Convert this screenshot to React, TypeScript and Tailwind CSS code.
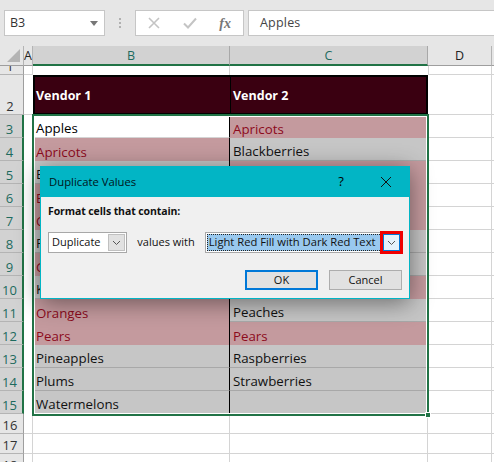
const rows: { n: string; h: string; b: string; bt: string; c: string; ct: string; clip?: boolean }[] = [
  { n: "3", h: "h-[23px]", b: "w", bt: "Apples", c: "r", ct: "Apricots" },
  { n: "4", h: "h-[23px]", b: "r", bt: "Apricots", c: "g", ct: "Blackberries" },
  { n: "5", h: "h-[23px]", b: "g", bt: "B", c: "r", ct: "", clip: true },
  { n: "6", h: "h-[23px]", b: "r", bt: "B", c: "r", ct: "", clip: true },
  { n: "7", h: "h-[23px]", b: "r", bt: "C", c: "r", ct: "", clip: true },
  { n: "8", h: "h-[23px]", b: "g", bt: "F", c: "g", ct: "", clip: true },
  { n: "9", h: "h-[23px]", b: "r", bt: "G", c: "g", ct: "", clip: true },
  { n: "10", h: "h-[23px]", b: "g", bt: "K", c: "r", ct: "", clip: true },
  { n: "11", h: "h-[23px]", b: "r", bt: "Oranges", c: "g", ct: "Peaches" },
  { n: "12", h: "h-[23px]", b: "r", bt: "Pears", c: "r", ct: "Pears" },
  { n: "13", h: "h-[23px]", b: "g", bt: "Pineapples", c: "g", ct: "Raspberries" },
  { n: "14", h: "h-[23px]", b: "g", bt: "Plums", c: "g", ct: "Strawberries" },
  { n: "15", h: "h-[23px]", b: "g", bt: "Watermelons", c: "g", ct: "" },
];

function cellCls(kind: string) {
  if (kind === "w") return "bg-white text-black border-b border-[#d4d4d4]";
  if (kind === "r") return "bg-[#c49a9e] text-[#8c0a1c]";
  return "bg-[#c6c6c6] text-[#111] border-b border-[#a8a8a8]";
}

function Chevron() {
  return (
    <svg width="9" height="6" viewBox="0 0 9 6" fill="none">
      <path d="M1 1 L4.5 4.5 L8 1" stroke="#555" strokeWidth="1" />
    </svg>
  );
}

function RowHead({ n, sel, h }: { n: string; sel?: boolean; h: string }) {
  return (
    <div
      className={`${h} w-6 shrink-0 flex items-end justify-center overflow-hidden border-b ${
        sel
          ? "bg-[#d2d2d2] text-[#1d6b5e] border-[#b4b4b4] border-r-2 border-r-[#217346]"
          : "bg-[#e6e6e6] text-[#333] border-[#b4b4b4] border-r border-r-[#9e9e9e]"
      } text-[13px] leading-[16px] pr-[3px]`}
    >
      {n}
    </div>
  );
}

function EmptyRow({ n, h }: { n: string; h: string }) {
  return (
    <div className="flex">
      <RowHead n={n} h={h} />
      <div className={`${h} w-[9px] shrink-0 border-b border-r border-[#d4d4d4]`} />
      <div className={`${h} w-[197px] shrink-0 border-b border-r border-[#d4d4d4]`} />
      <div className={`${h} w-[198px] shrink-0 border-b border-r border-[#d4d4d4]`} />
      <div className={`${h} w-[64px] shrink-0 border-b border-r border-[#d4d4d4]`} />
      <div className={`${h} flex-1 border-b border-[#d4d4d4]`} />
    </div>
  );
}

export default function App() {
  return (
    <div
      className="relative w-[494px] h-[462px] overflow-hidden bg-white"
      style={{ fontFamily: '"Open Sans", "Noto Sans", sans-serif' }}
    >
      {/* Formula bar */}
      <div className="h-[46px] bg-[#e6e6e6] flex items-start pt-[10px] pl-1">
        <div className="w-[101px] h-[26px] bg-white border border-[#c6c6c6] flex items-center justify-between pl-[5px] pr-[6px] text-[12.5px] text-[#333]">
          <span>B3</span>
          <svg width="8" height="5" viewBox="0 0 8 5">
            <path d="M0 0 H8 L4 5 Z" fill="#777" />
          </svg>
        </div>
        <div className="w-[30px] h-[26px] flex flex-col items-center justify-center gap-[2px]">
          <div className="w-[2px] h-[2px] bg-[#b0b0b0]" />
          <div className="w-[2px] h-[2px] bg-[#b0b0b0]" />
          <div className="w-[2px] h-[2px] bg-[#b0b0b0]" />
        </div>
        <div className="w-[109px] h-[26px] bg-white border border-[#c6c6c6] flex items-center shrink-0">
          <div className="w-[36px] flex justify-center pl-[1px]">
            <svg width="12" height="12" viewBox="0 0 12 12" fill="none">
              <path d="M1 1 L11 11 M11 1 L1 11" stroke="#c4c4c4" strokeWidth="1.6" />
            </svg>
          </div>
          <div className="w-[36px] flex justify-center">
            <svg width="14" height="12" viewBox="0 0 14 12" fill="none">
              <path d="M1 6.5 L5 10.5 L13 1.5" stroke="#c4c4c4" strokeWidth="2" />
            </svg>
          </div>
          <div
            className="w-[36px] text-center text-[14px] italic font-bold text-[#777]"
            style={{ fontFamily: '"Liberation Serif", serif' }}
          >
            fx
          </div>
        </div>
        <div className="ml-[4px] flex-1 h-[26px] bg-white border border-r-0 border-[#c6c6c6] flex items-center pl-[11px] text-[12.5px] text-[#444] tracking-[0.2px]">
          Apples
        </div>
      </div>

      {/* Column headers */}
      <div className="flex h-[20px] text-[12.5px] leading-[20px]">
        <div className="w-6 shrink-0 bg-[#e6e6e6] border-r border-[#b4b4b4] border-b border-b-[#9e9e9e] flex items-end justify-end pr-[3px] pb-[3px]">
          <svg width="13" height="13" viewBox="0 0 13 13">
            <path d="M13 0 V13 H0 Z" fill="#b4b4b4" />
          </svg>
        </div>
        <div className="w-[9px] shrink-0 bg-[#e6e6e6] border-r border-[#b4b4b4] border-b border-b-[#9e9e9e] flex justify-center text-[#222] overflow-hidden">
          A
        </div>
        <div className="w-[197px] shrink-0 bg-[#d2d2d2] border-r border-[#a8a8a8] border-b-2 border-b-[#217346] text-center text-[#1d6b5e]">
          B
        </div>
        <div className="w-[198px] shrink-0 bg-[#d2d2d2] border-r border-[#a8a8a8] border-b-2 border-b-[#217346] text-center text-[#1d6b5e]">
          C
        </div>
        <div className="w-[64px] shrink-0 bg-[#e6e6e6] border-r border-[#b4b4b4] border-b border-b-[#9e9e9e] text-center text-[#222]">
          D
        </div>
        <div className="flex-1 bg-[#e6e6e6] border-b border-b-[#9e9e9e]" />
      </div>

      {/* Row 1 */}
      <div className="flex">
        <RowHead n="1" h="h-[9px]" />
        <div className="h-[9px] w-[9px] shrink-0 border-b border-r border-[#d4d4d4]" />
        <div className="h-[9px] w-[197px] shrink-0 border-r border-[#d4d4d4]" />
        <div className="h-[9px] w-[198px] shrink-0" />
        <div className="h-[9px] w-[64px] shrink-0 border-b border-r border-[#d4d4d4] border-l" />
        <div className="h-[9px] flex-1 border-b border-[#d4d4d4]" />
      </div>

      {/* Row 2 */}
      <div className="flex">
        <RowHead n="2" h="h-[40px]" />
        <div className="h-[40px] w-[9px] shrink-0 border-b border-[#d4d4d4]" />
        <div className="h-[40px] w-[197px] shrink-0 bg-[#3a0011] border-2 border-r-0 border-black text-white font-bold text-[12.5px] flex items-center pl-[1px] pt-[3px]">
          Vendor 1
        </div>
        <div className="h-[40px] w-[198px] shrink-0 bg-[#3a0011] border-2 border-l border-black text-white font-bold text-[12.5px] flex items-center pl-[2px] pt-[3px]">
          Vendor 2
        </div>
        <div className="h-[40px] w-[64px] shrink-0 border-b border-r border-[#d4d4d4]" />
        <div className="h-[40px] flex-1 border-b border-[#d4d4d4]" />
      </div>

      {/* Data rows */}
      {rows.map((r) => (
        <div className="flex" key={r.n}>
          <RowHead n={r.n} sel h={r.h} />
          <div className={`${r.h} w-[9px] shrink-0`} />
          <div
            className={`${r.h} w-[197px] shrink-0 flex items-end pl-[3px] text-[13.3px] leading-[17px] border-r border-r-black ${cellCls(r.b)}`}
          >
            {r.bt}
          </div>
          <div
            className={`${r.h} w-[198px] shrink-0 flex items-end pl-[3px] text-[13.3px] leading-[17px] ${cellCls(r.c)}`}
          >
            {r.ct}
          </div>
          <div className={`${r.h} w-[64px] shrink-0 border-b border-r border-[#d4d4d4]`} />
          <div className={`${r.h} flex-1 border-b border-[#d4d4d4]`} />
        </div>
      ))}

      <EmptyRow n="16" h="h-[20px]" />
      <EmptyRow n="17" h="h-[20px]" />
      <EmptyRow n="18" h="h-[20px]" />

      {/* Selection outline */}
      <div className="absolute left-[32px] top-[114px] w-[397px] h-[302px] border-2 border-[#217346]">
        <div className="w-full h-full border border-white" />
      </div>
      <div className="absolute left-[425px] top-[412px] w-[6px] h-[6px] bg-[#217346] border border-white" />

      {/* Dialog */}
      <div className="absolute left-[40px] top-[166px] w-[370px] h-[133px] bg-[#f0f0f0] border border-[#02b5c5] shadow-[0_4px_22px_rgba(0,0,0,0.45)] flex flex-col text-[#111]">
        <div className="h-[30px] shrink-0 bg-[#02b5c5] flex items-center pl-[8px] text-[11.3px] text-[#00141a]">
          <span className="flex-1">Duplicate Values</span>
          <span className="w-[46px] text-center text-[13px] pl-[2px] text-black">?</span>
          <div className="w-[46px] flex justify-center">
            <svg width="12" height="12" viewBox="0 0 12 12" fill="none">
              <path d="M1 1 L11 11 M11 1 L1 11" stroke="#111" strokeWidth="1" />
            </svg>
          </div>
        </div>
        <div className="flex-1 flex flex-col pl-[7px] pt-[6px] pr-[7px] text-[11px]">
          <div className="font-bold text-[10.5px] tracking-[-0.1px] leading-[16px]">Format cells that contain:</div>
          <div className="flex items-center mt-[13px] h-[21px]">
            <div className="w-[80px] h-[21px] bg-white border border-[#a8a8a8] flex items-center justify-between pl-[3px] pr-[1px]">
              <span>Duplicate</span>
              <div className="w-[17px] h-[17px] bg-[#e1e1e1] border border-[#c0c0c0] flex items-center justify-center">
                <Chevron />
              </div>
            </div>
            <span className="ml-[10px] w-[68px]">values with</span>
            <div className="w-[199px] h-[21px] bg-white border border-[#a8a8a8] flex items-center pl-[1px] relative">
              <div className="w-[175px] h-[17px] bg-[#99c9ef] border border-dotted border-[#222] flex items-center pl-[1px] overflow-hidden whitespace-nowrap text-[11.2px]">
                Light Red Fill with Dark Red Text
              </div>
              <div className="absolute right-[-2px] top-[-2px] w-[23px] h-[23px] border-[3px] border-[#f00000] bg-white flex items-center justify-center">
                <div className="w-[17px] h-[17px] bg-[#e5f1fb] border border-[#0078d7] flex items-center justify-center">
                  <Chevron />
                </div>
              </div>
            </div>
          </div>
          <div className="flex justify-end gap-[11px] mt-[17px]">
            <div className="w-[73px] h-[20px] bg-[#e1e1e1] border-2 border-[#0078d7] flex items-center justify-center">
              OK
            </div>
            <div className="w-[73px] h-[20px] bg-[#e1e1e1] border border-[#adadad] flex items-center justify-center">
              Cancel
            </div>
          </div>
        </div>
      </div>
    </div>
  );
}
